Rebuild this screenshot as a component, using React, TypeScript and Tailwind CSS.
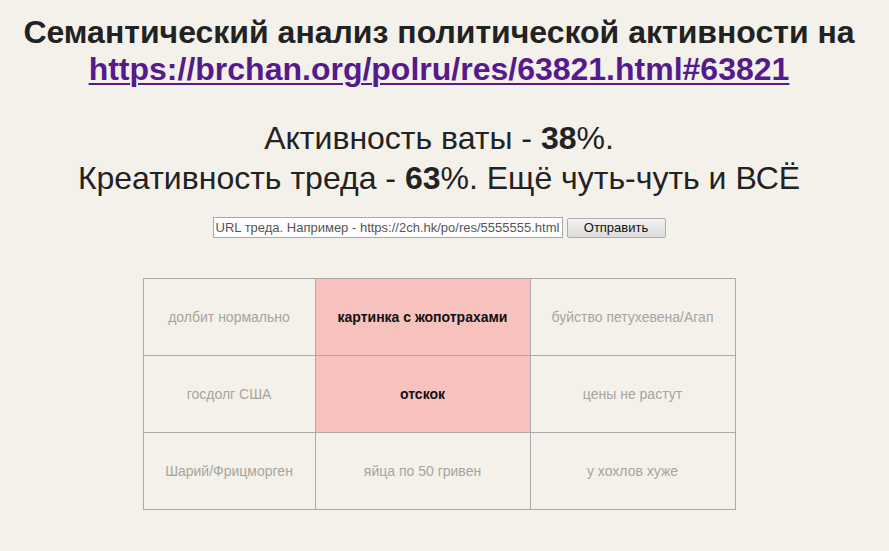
import React from "react";

const cells: { t: string; hot?: boolean }[] = [
  { t: "долбит нормально" },
  { t: "картинка с жопотрахами", hot: true },
  { t: "буйство петухевена/Агап" },
  { t: "госдолг США" },
  { t: "отскок", hot: true },
  { t: "цены не растут" },
  { t: "Шарий/Фрицморген" },
  { t: "яйца по 50 гривен" },
  { t: "у хохлов хуже" },
];

export default function App() {
  return (
    <div
      className="min-h-[551px] w-full bg-[#f3f1ea] text-[#222]"
      style={{ fontFamily: '"Liberation Sans", Arial, sans-serif' }}
    >
      <div className="w-[878px] flex flex-col items-center">
        <h1 className="mt-[14px] text-[32px] leading-[37px] font-bold text-center text-[#222] whitespace-nowrap">
          Семантический анализ политической активности на
          <br />
          <a href="#" className="text-[#551a8b] underline decoration-[2px] underline-offset-[3px]">
            https://brchan.org/polru/res/63821.html#63821
          </a>
        </h1>
        <div className="mt-[30px] text-[32px] leading-[40px] text-center text-[#222]">
          Активность ваты - <b>38</b>%.
          <br />
          Креативность треда - <b>63</b>%. Ещё чуть-чуть и ВСЁ
        </div>
        <div className="mt-[19px] flex items-center gap-[4px]">
          <input
            className="w-[350px] h-[21px] border border-[#a9a9a9] bg-white px-[2px] text-[13px] text-[#555] outline-none"
            defaultValue="URL треда. Например - https://2ch.hk/po/res/5555555.html"
          />
          <button className="w-[99px] h-[20px] border border-[#adadad] rounded-[2px] bg-gradient-to-b from-[#f2f2f2] to-[#dcdcdc] text-[13px] text-[#111] leading-none">
            Отправить
          </button>
        </div>
        <div className="mt-[40px] grid grid-cols-[172px_215px_205px] border-l border-t border-[#aaaaaa]">
          {cells.map((c, i) => (
            <div
              key={i}
              className={
                "h-[77px] flex items-center justify-center border-r border-b border-[#aaaaaa] text-[14px] " +
                (c.hot ? "bg-[#f7c2bd] font-bold text-[#111]" : "text-[#a8a49e]")
              }
            >
              {c.t}
            </div>
          ))}
        </div>
      </div>
    </div>
  );
}
